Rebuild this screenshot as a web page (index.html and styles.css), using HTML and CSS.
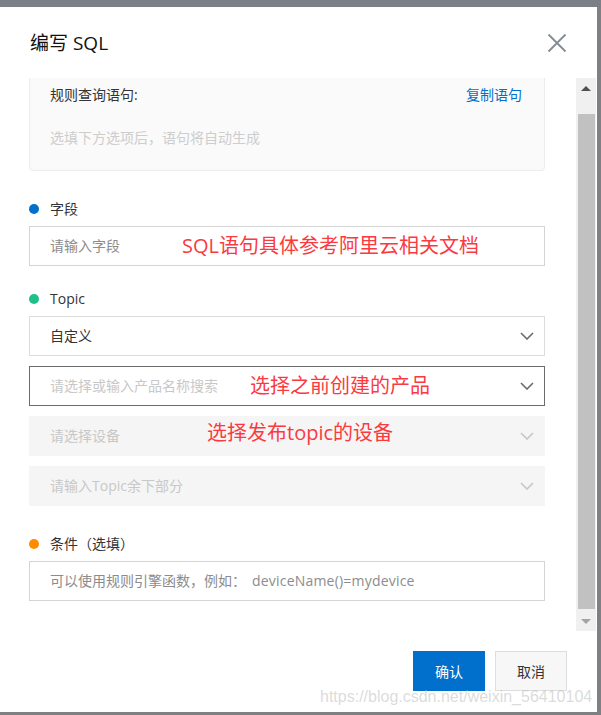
FILE: index.html
```html
<!DOCTYPE html>
<html lang="zh-CN">
<head>
<meta charset="utf-8">
<title>编写 SQL</title>
<link rel="stylesheet" href="styles.css">
</head>
<body>
<div class="topbar"></div>
<div class="dialog">
  <div class="dlg-header">
    <h2 class="dlg-title">编写 SQL</h2>
    <button class="close" aria-label="关闭">
      <svg width="20" height="20" viewBox="0 0 20 20"><path d="M1.5 1.5 L18.5 18.5 M18.5 1.5 L1.5 18.5" stroke="#858b93" stroke-width="1.8" fill="none"/></svg>
    </button>
  </div>
  <div class="dlg-body">
    <div class="scroll">
      <div class="scroll-inner">
        <div class="sql-box">
          <div class="sql-head"><span>规则查询语句:</span><a class="copy">复制语句</a></div>
          <div class="sql-ph">选填下方选项后，语句将自动生成</div>
        </div>

        <div class="item item-field">
          <div class="label"><i class="dot blue"></i>字段</div>
          <div class="control"><span class="ph dark">请输入字段</span><span class="note n1">SQL语句具体参考阿里云相关文档</span></div>
        </div>

        <div class="item item-topic">
          <div class="label"><i class="dot green"></i>Topic</div>
          <div class="control select"><span class="val">自定义</span><svg class="chev" width="14" height="8" viewBox="0 0 14 8"><path d="M1 1 L7 7 L13 1" stroke="#6b6b6b" stroke-width="1.6" fill="none"/></svg></div>
          <div class="control select focus"><span class="ph">请选择或输入产品名称搜索</span><span class="note n2">选择之前创建的产品</span><svg class="chev" width="14" height="8" viewBox="0 0 14 8"><path d="M1 1 L7 7 L13 1" stroke="#6b6b6b" stroke-width="1.6" fill="none"/></svg></div>
          <div class="control select disabled"><span class="ph">请选择设备</span><span class="note n3">选择发布topic的设备</span><svg class="chev" width="14" height="8" viewBox="0 0 14 8"><path d="M1 1 L7 7 L13 1" stroke="#c6c6c6" stroke-width="1.6" fill="none"/></svg></div>
          <div class="control select disabled"><span class="ph">请输入Topic余下部分</span><svg class="chev" width="14" height="8" viewBox="0 0 14 8"><path d="M1 1 L7 7 L13 1" stroke="#c6c6c6" stroke-width="1.6" fill="none"/></svg></div>
        </div>

        <div class="item item-cond">
          <div class="label"><i class="dot orange"></i>条件（选填）</div>
          <div class="control"><span class="ph dark">可以使用规则引擎函数，例如：<span class="latin">deviceName()=mydevice</span></span></div>
        </div>
      </div>
    </div>
    <div class="vscroll">
      <div class="sb-btn"><i class="tri up"></i></div>
      <div class="sb-track"><div class="sb-thumb"></div></div>
      <div class="sb-btn"><i class="tri down"></i></div>
    </div>
  </div>
  <div class="dlg-footer">
    <button class="btn primary">确认</button>
    <button class="btn">取消</button>
  </div>
  <div class="watermark">https://blog.csdn.net/weixin_56410104</div>
</div>
</body>
</html>
```

FILE: styles.css
```css
* { box-sizing: border-box; }
html, body { margin: 0; padding: 0; }
body {
  width: 601px;
  height: 715px;
  background: #7f8083;
  font-family: "Open Sans", "Noto Sans CJK SC", sans-serif;
  color: #333;
  display: flex;
  flex-direction: column;
  overflow: hidden;
}
.topbar {
  height: 7px;
  background: #7b7f87;
  flex: none;
}
.dialog {
  position: relative;
  background: #fff;
  width: 597px;
  height: 705px;
  display: flex;
  flex-direction: column;
}
.dlg-header {
  height: 71px;
  flex: none;
  display: flex;
  align-items: center;
  justify-content: space-between;
  padding: 0 30px 0 30px;
}
.dlg-title {
  margin: 0;
  font-size: 19px;
  font-weight: 400;
  line-height: 24px;
  color: #111;
}
.close {
  border: 0;
  background: none;
  padding: 0;
  width: 20px;
  height: 20px;
  display: block;
}
.close svg { display: block; }

.dlg-body {
  height: 553px;
  flex: none;
  display: flex;
}
.scroll {
  flex: 1;
  overflow: hidden;
}
.scroll-inner {
  margin-top: -10px;
  padding: 0 31px 0 29px;
}
.sql-box {
  background: #fafafa;
  border: 1px solid #ececec;
  border-radius: 4px;
  padding: 15px 21px 21px 20px;
  font-size: 14px;
}
.sql-head {
  display: flex;
  justify-content: space-between;
  line-height: 22px;
  color: #333;
}
.copy { color: #0070cc; margin-right: 1px; }
.sql-ph {
  margin-top: 21px;
  line-height: 22px;
  color: #cdcdcd;
}

.item { font-size: 14px; }
.item-field { margin-top: 28px; }
.item-topic { margin-top: 23px; }
.item-cond { margin-top: 28px; }
.label {
  height: 20px;
  line-height: 20px;
  display: flex;
  align-items: center;
  color: #333;
  margin-bottom: 7px;
}
.dot {
  width: 10px;
  height: 10px;
  border-radius: 50%;
  margin-right: 11px;
  flex: none;
}
.dot.blue { background: #0070cc; }
.dot.green { background: #1fc08c; }
.dot.orange { background: #ff8a00; }

.control {
  position: relative;
  height: 40px;
  border: 1px solid #d4d4d4;
  padding: 0 10px 0 20px;
  display: flex;
  align-items: center;
  line-height: 20px;
}
.control + .control { margin-top: 10px; }
.select { justify-content: space-between; border-color: #dcdcdc; }
.select.focus { border-color: #6b6b6b; }
.select.disabled { background: #f5f5f5; border-color: #f5f5f5; }
.val { color: #333; }
.ph { color: #c8c8c8; }
.ph.dark { color: #8c8c8c; }
.latin { margin-left: 6px; letter-spacing: 0.2px; }
.chev { display: block; flex: none; }

.note {
  position: absolute;
  top: 50%;
  transform: translateY(-50%);
  font-size: 20px;
  line-height: 24px;
  color: #fb3a3f;
  white-space: nowrap;
}
.n1 { left: 152px; }
.n2 { left: 220px; }
.n3 { left: 177px; margin-top: -3px; }

.vscroll {
  width: 20px;
  margin-right: 1px;
  background: #f0f0f0;
  display: flex;
  flex-direction: column;
  flex: none;
}
.sb-btn {
  height: 20px;
  display: flex;
  align-items: center;
  justify-content: center;
  flex: none;
}
.sb-track {
  flex: 1;
  padding: 16px 1px 2px 2px;
}
.sb-thumb {
  height: 495px;
  background: #c1c1c1;
}
.tri {
  width: 0;
  height: 0;
  border-left: 5px solid transparent;
  border-right: 5px solid transparent;
}
.tri.up { border-bottom: 5px solid #505050; }
.tri.down { border-top: 5px solid #a3a3a3; }

.dlg-footer {
  flex: 1;
  display: flex;
  justify-content: flex-end;
  gap: 10px;
  padding: 20px 30px 0 0;
}
.btn {
  width: 72px;
  height: 40px;
  font-family: "Open Sans", "Noto Sans CJK SC", sans-serif;
  font-size: 14px;
  border: 1px solid #dedede;
  background: #f7f7f7;
  color: #333;
  padding: 0;
}
.btn.primary {
  background: #0070cc;
  border-color: #0070cc;
  color: #fff;
}
.watermark {
  position: absolute;
  left: 320px;
  bottom: 5px;
  font-family: "Liberation Sans", Arial, sans-serif;
  font-size: 16px;
  line-height: 20px;
  color: rgba(190, 190, 190, 0.55);
  pointer-events: none;
  white-space: nowrap;
}
```
